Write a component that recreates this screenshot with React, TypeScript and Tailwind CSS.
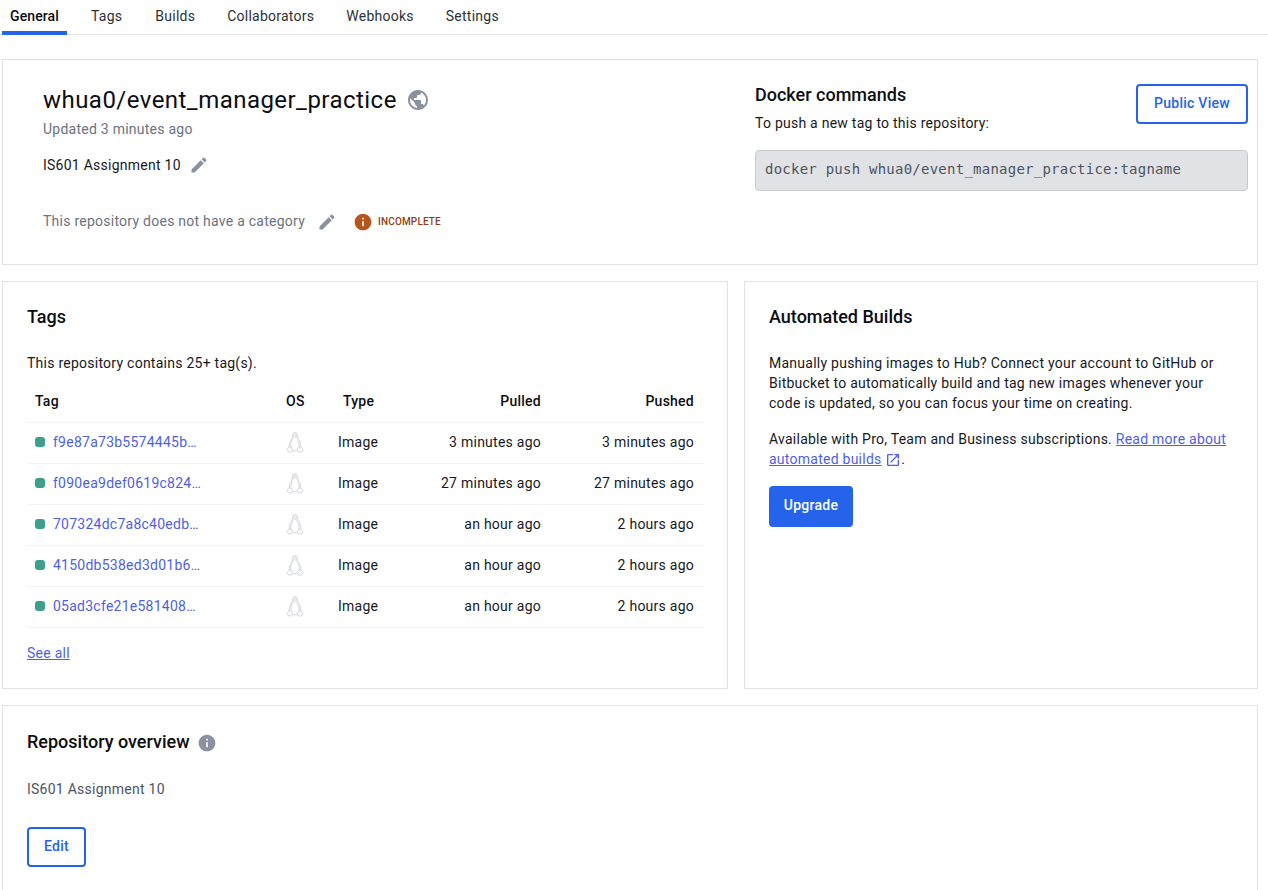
import { MdEdit, MdInfo, MdOpenInNew, MdPublic } from "react-icons/md";

const tabs = ["General", "Tags", "Builds", "Collaborators", "Webhooks", "Settings"];

const rows = [
  { tag: "f9e87a73b5574445b…", pulled: "3 minutes ago", pushed: "3 minutes ago" },
  { tag: "f090ea9def0619c824…", pulled: "27 minutes ago", pushed: "27 minutes ago" },
  { tag: "707324dc7a8c40edb…", pulled: "an hour ago", pushed: "2 hours ago" },
  { tag: "4150db538ed3d01b6…", pulled: "an hour ago", pushed: "2 hours ago" },
  { tag: "05ad3cfe21e581408…", pulled: "an hour ago", pushed: "2 hours ago" },
];

const Penguin = () => (
  <svg width="18" height="21" viewBox="0 0 18 21" fill="none" stroke="#d6d8dc" strokeWidth="1">
    <path
      d="M9 .7C7.2.7 6.4 2 6.5 4C6.6 6 5.6 7.4 4.6 9C3.4 11 2.9 13.2 3.3 15.6H14.7C15.1 13.2 14.6 11 13.4 9C12.4 7.4 11.4 6 11.5 4C11.6 2 10.8.7 9 .7Z"
      fill="#e9eaec"
    />
    <path d="M7.8 6.4C6.2 8.6 5.2 12 6 17H12C12.8 12 11.8 8.6 10.2 6.4C9.4 5.8 8.6 5.8 7.8 6.4Z" fill="#ffffff" stroke="none" />
    <path d="M3.2 15.2C1.6 15.8.7 17 1.1 18.2C1.6 19.9 4.6 20.6 6 19.6C7 18.8 6.8 17 5.8 15.9C5.2 15.1 4 14.8 3.2 15.2Z" fill="#fafafa" />
    <path d="M14.8 15.2C16.4 15.8 17.3 17 16.9 18.2C16.4 19.9 13.4 20.6 12 19.6C11 18.8 11.2 17 12.2 15.9C12.8 15.1 14 14.8 14.8 15.2Z" fill="#fafafa" />
    <path d="M6.8 18.8H11.2" />
  </svg>
);

const OutlineButton = ({ label, width }: { label: string; width: string }) => (
  <button className={`${width} h-10 rounded border-2 border-[#2563eb] pb-0.5 text-sm font-medium text-[#2563eb]`}>
    {label}
  </button>
);

export default function App() {
  return (
    <div className="h-screen overflow-hidden bg-white text-[#17191e] tracking-[0.25px] font-['Roboto',sans-serif]">
      <div className="flex h-[35px] border-b border-[#e1e2e6] pl-0.5">
        <a
          href="#"
          className="flex h-[35px] w-[65px] items-center justify-center mr-4 border-b-[4px] border-[#2563eb] text-sm font-medium tracking-[0.1px] text-[#0b0d10]"
        >
          General
        </a>
        {tabs.slice(1).map((tab, i) => (
          <a
            key={tab}
            href="#"
            className={`flex h-[35px] items-center px-2 text-sm pb-[3px] text-[#2c3138] ${i === 0 ? "mr-[17px]" : "mr-4"}`}
          >
            {tab}
          </a>
        ))}
      </div>

      <div className="flex w-[1256px] ml-0.5 mt-6 flex-col gap-4">
        <section className="flex h-[206px] border border-[#e1e2e6] pt-6 pr-[9px]">
          <div className="w-[752px] pl-10">
            <div className="flex items-center gap-[9px]">
              <h1 className="text-2xl leading-8 tracking-[0.46px] text-[#0b0d10]">whua0/event_manager_practice</h1>
              <MdPublic className="text-[24px] text-[#8b91a0]" />
            </div>
            <p className="text-sm leading-5 text-[#6c7280] mt-[3px]">Updated 3 minutes ago</p>
            <div className="mt-4 flex items-center gap-2 text-sm leading-5">
              <span>IS601 Assignment 10</span>
              <MdEdit className="text-[20px] text-[#8b91a0]" />
            </div>
            <div className="mt-[36px] flex items-center text-sm leading-5">
              <span className="text-[#6c7280]">This repository does not have a category</span>
              <MdEdit className="ml-3 translate-y-px text-[20px] text-[#8b91a0]" />
              <MdInfo className="ml-4 translate-y-px text-[20px] text-[#b5541c]" />
              <span className="ml-[5px] translate-y-px text-[10px] tracking-[0.15px] font-medium text-[#8f3f10]">
                INCOMPLETE
              </span>
            </div>
          </div>
          <div className="flex-1">
            <div className="flex justify-between">
              <div>
                <h2 className="text-lg leading-[22px] tracking-normal font-medium text-[#0b0d10]">Docker commands</h2>
                <p className="mt-[7px] text-sm leading-5">To push a new tag to this repository:</p>
              </div>
              <OutlineButton label="Public View" width="w-28" />
            </div>
            <div className="mt-[17px] flex h-[41px] items-center rounded border border-[#c8cad0] bg-[#e1e2e6] px-[9px] pb-[3px] font-['DejaVu_Sans_Mono',monospace] text-sm tracking-[0.24px] text-[#4d5460]">
              docker push whua0/event_manager_practice:tagname
            </div>
          </div>
        </section>

        <div className="flex gap-4">
          <section className="h-[408px] w-[726px] border border-[#e1e2e6] pl-6 pr-[23px] pt-6">
            <h2 className="text-lg leading-[22px] tracking-normal font-medium text-[#0b0d10]">Tags</h2>
            <p className="mt-[25px] text-sm leading-5">This repository contains 25+ tag(s).</p>
            <div className="mt-[7px] flex h-[43px] items-center text-sm font-medium leading-5 text-[#0b0d10] border-b border-[#f0f1f3]">
              <span className="w-[259px] pl-2">Tag</span>
              <span className="w-[52px]">OS</span>
              <span className="w-[65px] pl-[5px]">Type</span>
              <span className="w-[138px] text-right">Pulled</span>
              <span className="flex-1 text-right pr-[10px]">Pushed</span>
            </div>
            {rows.map((row) => (
              <div key={row.tag} className="flex h-[41px] items-center pb-[2px] text-sm leading-5 border-b border-[#f0f1f3]">
                <div className="flex w-[259px] items-center pl-2">
                  <span className="h-2.5 w-2.5 rounded-[3px] bg-[#3f9f8d]" />
                  <a href="#" className="ml-2 text-[#4f5fe0]">
                    {row.tag}
                  </a>
                </div>
                <div className="w-[52px] flex">
                  <Penguin />
                </div>
                <span className="w-[65px]">Image</span>
                <span className="w-[138px] text-right">{row.pulled}</span>
                <span className="flex-1 text-right pr-[10px]">{row.pushed}</span>
              </div>
            ))}
            <a href="#" className="mt-[15px] block text-sm leading-5 text-[#4f5fe0] underline">
              See all
            </a>
          </section>

          <section className="h-[408px] flex-1 border border-[#e1e2e6] px-6 pt-6">
            <h2 className="text-lg leading-[22px] tracking-normal font-medium text-[#0b0d10]">Automated Builds</h2>
            <p className="mt-[25px] text-sm leading-5">
              Manually pushing images to Hub? Connect your account to GitHub or Bitbucket to automatically build and tag
              new images whenever your code is updated, so you can focus your time on creating.
            </p>
            <p className="mt-4 text-sm leading-5">
              Available with Pro, Team and Business subscriptions.{" "}
              <a href="#" className="text-[#4f5fe0] underline">
                Read more about automated builds
              </a>{" "}
              <MdOpenInNew className="inline text-[16px] text-[#4f5fe0] align-[-4px]" />.
            </p>
            <button className="mt-[17px] h-[41px] w-[84px] rounded bg-[#2563eb] pb-[3px] text-sm font-medium text-white">
              Upgrade
            </button>
          </section>
        </div>

        <section className="h-[200px] border border-[#e1e2e6] px-6 pt-6">
          <div className="flex items-center gap-[7px]">
            <h2 className="text-lg leading-[22px] tracking-normal font-medium text-[#0b0d10]">Repository overview</h2>
            <MdInfo className="text-[20px] text-[#8b91a0] mt-[3px]" />
          </div>
          <p className="mt-[26px] text-sm leading-5 text-[#4d5460]">IS601 Assignment 10</p>
          <div className="mt-7">
            <OutlineButton label="Edit" width="w-[59px]" />
          </div>
        </section>
      </div>
    </div>
  );
}
